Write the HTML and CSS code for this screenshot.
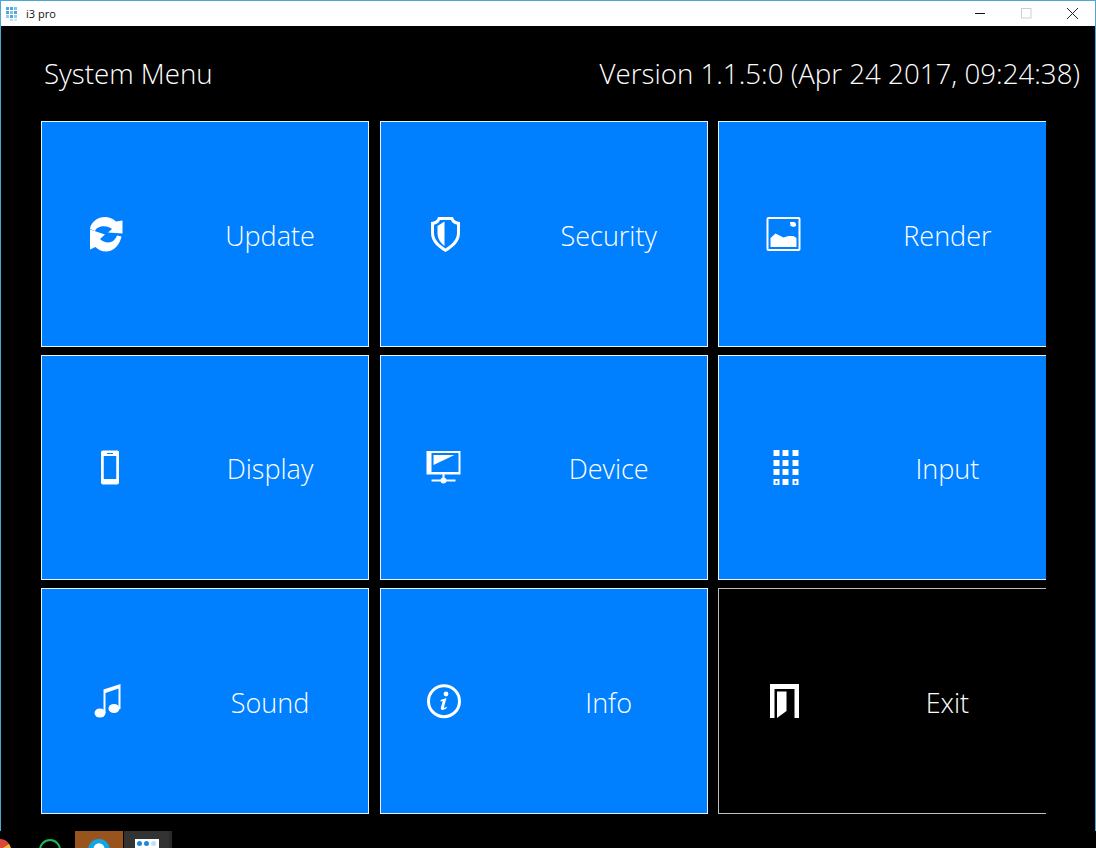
FILE: index.html
```html
<!DOCTYPE html>
<html lang="en">
<head>
<meta charset="utf-8">
<title>i3 pro</title>
<link rel="stylesheet" href="styles.css">
</head>
<body>
<div class="window">
  <div class="titlebar">
    <svg class="app-icon" width="14" height="16" viewBox="0 0 14 16">
      <g fill="#4aa8e0">
        <rect x="0" y="1" width="3" height="3"/><rect x="4" y="1" width="3" height="3"/><rect x="8" y="1" width="3" height="3" opacity=".7"/>
        <rect x="0" y="5" width="3" height="3"/><rect x="4" y="5" width="3" height="3" opacity=".7"/><rect x="8" y="5" width="3" height="3"/>
        <rect x="0" y="9" width="3" height="3" opacity=".6"/><rect x="4" y="9" width="3" height="3"/><rect x="8" y="9" width="3" height="3" opacity=".6"/>
        <rect x="4" y="13" width="3" height="2" opacity=".4"/><rect x="8" y="13" width="3" height="2" opacity=".3"/>
      </g>
    </svg>
    <span class="app-title">i3 pro</span>
    <div class="controls">
      <svg class="ctl" width="46" height="25" viewBox="0 0 46 25"><path d="M18 12.500h10" stroke="#111" fill="none"/></svg>
      <svg class="ctl" width="46" height="25" viewBox="0 0 46 25"><rect x="18.500" y="7.500" width="9.500" height="9.500" stroke="#cfcfcf" fill="none"/></svg>
      <svg class="ctl" width="46" height="25" viewBox="0 0 46 25"><path d="M18 7l11 11M29 7L18 18" stroke="#222" fill="none"/></svg>
    </div>
  </div>
  <div class="content">
    <header class="header">
      <span class="heading">System Menu</span>
      <span class="heading">Version 1.1.5:0 (Apr 24 2017, 09:24:38)</span>
    </header>
    <div class="grid-clip">
      <div class="grid">
        <div class="tile">
          <svg class="icon" viewBox="2 -1 70 70"><path d="M20 29C21 21 29 16.500 36 17C40 17.200 43.500 19 46 21.500L52.500 20.500V33.500L38 32.500L42 29C39 26.500 35 25.800 31 26.500C28 27.300 26 28.500 25 31Z"/><path d="M20 29.500L35 34.500L30 39C33 42 37 43 41 42C44 41 46 38 47 35.500L51.500 36.500C49.500 45.500 43 51.500 36 51.500C31.500 51.500 28 49.500 25.500 47L20 49.500Z"/></svg>
          <span class="label">Update</span>
        </div>
        <div class="tile">
          <svg class="icon" viewBox="0.500 -1 70 70"><path fill-rule="evenodd" d="M28.500 17H43.500L44.500 19.500C46 21 48 22 50.500 22V33C50.500 42 43 48 36 52C29 48 21.500 42 21.500 33V22C24 22 26 21 27.500 19.500ZM30.500 20L29.500 22C28 23.500 26.500 24.300 24.500 24.700V33C24.500 40 30.500 45 36 48.500C41.500 45 47.500 40 47.500 33V24.700C45.500 24.300 44 23.500 42.500 22L41.500 20Z"/><path d="M28 26L35 21.500V46C31 43 28 38.500 28 33Z"/></svg>
          <span class="label">Security</span>
        </div>
        <div class="tile">
          <svg class="icon" viewBox="-1.500 -1 70 70"><rect x="17" y="18" width="32" height="32" rx="1" fill="none" stroke="#fff" stroke-width="2"/><path d="M20 47V38L25 33.500L30 36L33 37.500L38 36L43 36L46 38V47Z"/><path d="M39.500 22H44L45.500 23.500V26L43 27L40 26Z"/></svg>
          <span class="label">Render</span>
        </div>
        <div class="tile">
          <svg class="icon" viewBox="2 -3 70 70"><path fill-rule="evenodd" d="M33 15.500H47.500Q49 15.500 49 17V47.500Q49 49.500 47 49.500H33Q31 49.500 31 47.500V17Q31 15.500 33 15.500ZM33.500 21V44H46.500V21Z"/><rect x="33" y="21" width="1" height="23" opacity=".5"/><rect x="46" y="21" width="1" height="23" opacity=".5"/><rect x="37" y="18" width="6" height="1" fill="#007fff"/></svg>
          <span class="label">Display</span>
        </div>
        <div class="tile">
          <svg class="icon" viewBox="0.500 -3 70 70"><path fill-rule="evenodd" d="M17 16H51V39.500H17ZM22 18V37H49V18Z"/><path d="M24 20H45L24 30Z"/><rect x="22" y="44.500" width="24" height="2"/><circle cx="34" cy="45.500" r="3"/><rect x="33" y="39" width="2" height="6"/></svg>
          <span class="label">Device</span>
        </div>
        <div class="tile">
          <svg class="icon" viewBox="-1.500 -3 70 70"><path fill-rule="evenodd" d="M23 15h6v6h-6zM32 15h6v6h-6zM42 15h6v6h-6zM23 25h6v6h-6zM32 25h6v6h-6zM42 25h6v6h-6zM23 34h6v6h-6zM32 34h6v6h-6zM42 34h6v6h-6zM23 44h6v6h-6zM25 46v2.500h2V46zM32 44h6v6h-6zM42 44h6v6h-6zM44 46v2.500h2V46z"/></svg>
          <span class="label">Input</span>
        </div>
        <div class="tile">
          <svg class="icon" viewBox="2 -2 70 70"><ellipse cx="30" cy="45" rx="5.500" ry="4.500"/><ellipse cx="44" cy="40.500" rx="5.500" ry="4.500"/><path d="M33.500 45V21.500L50.500 16V41H48.500V20.500L35.500 25V45Z"/></svg>
          <span class="label">Sound</span>
        </div>
        <div class="tile">
          <svg class="icon" viewBox="0 -2.500 70 70"><circle cx="34" cy="32.700" r="15.500" fill="none" stroke="#fff" stroke-width="3"/><circle cx="36" cy="25.500" r="2.400"/><path d="M30.500 31.500L36.500 29.500L34 38.500C33.800 39.500 34.500 39.800 36.500 38.300L37 39.300C34 41.800 30.500 42.500 30.800 39.300L32.800 32.500L30.800 33Z"/></svg>
          <span class="label">Info</span>
        </div>
        <div class="tile tile-exit">
          <svg class="icon" viewBox="-1.500 -2 70 70"><path d="M19.500 16H48.500V50H44V21H24V50H19.500Z"/><path d="M26.500 23.500H36V43L26.500 50Z"/></svg>
          <span class="label">Exit</span>
        </div>
      </div>
    </div>
  </div>
</div>
<div class="dock">
  <svg class="dock-chrome" width="12" height="10" viewBox="0 0 12 10"><circle cx="0" cy="11" r="11" fill="#d9483b"/><path d="M0 11H11A11 11 0 0 0 9 5Z" fill="#e7b93c"/></svg>
  <svg class="dock-green" width="24" height="9" viewBox="0 0 24 9"><circle cx="11" cy="11" r="10" fill="none" stroke="#1fb85a" stroke-width="2"/></svg>
  <div class="dock-skype"><span class="skype-mark"></span></div>
  <div class="dock-dark"><div class="dots"><i></i><i></i><i class="hollow"></i></div></div>
</div>
</body>
</html>
```
FILE: styles.css
```css
* { box-sizing: border-box; }
html, body { margin: 0; padding: 0; background: #000; }
body { width: 1096px; height: 848px; overflow: hidden; display: flex; flex-direction: column; }

.window {
  height: 831px;
  flex: none;
  display: flex;
  flex-direction: column;
  border: 1px solid #4aa8d8;
  border-bottom: 0;
}
.titlebar {
  height: 25px;
  flex: none;
  background: #fff;
  display: flex;
  align-items: center;
  padding-left: 5px;
}
.app-icon { flex: none; }
.app-title {
  margin-left: 6px;
  font: 11px "Open Sans", "Liberation Sans", sans-serif;
  color: #111;
}
.controls { margin-left: auto; display: flex; }
.ctl { display: block; }

.content { flex: 1; background: #000; color: #fff; min-height: 0; }
.header {
  height: 95px;
  display: flex;
  justify-content: space-between;
  align-items: center;
  padding: 0 15px 2px 43px;
}
.heading {
  font: 300 27.7px "Open Sans", "Liberation Sans", sans-serif;
  color: #fff;
  white-space: nowrap;
}
.grid-clip { width: 1045px; padding-left: 40px; overflow: hidden; }
.grid {
  width: 1040px;
  display: grid;
  grid-template-columns: 328.4px 328.4px 340px;
  grid-auto-rows: 225.5px;
  gap: 8px 10.3px;
}
.tile {
  background: #007fff;
  border: 1px solid #e8f3ff;
  display: grid;
  grid-template-columns: 129px 198px;
  align-items: center;
}
.tile-exit { background: #000; border-color: #bdbdbd; }
.icon {
  width: 70px;
  height: 70px;
  justify-self: center;
  fill: #fff;
}
.label {
  font: 300 27px "Open Sans", "Liberation Sans", sans-serif;
  text-align: center;
  color: #fff;
  padding-top: 3px;
}

.dock { height: 17px; flex: none; position: relative; background: #000; display: flex; }
.dock-chrome { margin-top: 8px; flex: none; }
.dock-green { margin: 8px 0 0 27px; flex: none; }
.dock-skype {
  width: 48px;
  margin-left: 12px;
  background: #98541c;
  flex: none;
  display: flex;
  justify-content: center;
  overflow: hidden;
}
.skype-mark {
  width: 22px;
  height: 22px;
  margin-top: 8px;
  border-radius: 50%;
  background: radial-gradient(circle at 50% 45%, #fff 0 5px, #12a5e4 6px);
}
.dock-dark {
  width: 48px;
  margin-left: 1px;
  background: #333;
  border-right: 3px solid #2a2a2a;
  display: flex;
  justify-content: center;
  flex: none;
}
.dots {
  width: 24px;
  height: 9px;
  margin-top: 8px;
  background: #fff;
  display: flex;
  gap: 2px;
  justify-content: center;
  padding-top: 2px;
}
.dots i { width: 5px; height: 5px; border-radius: 50%; background: #1e88d8; display: block; }
.dots .hollow { background: #bfe0f7; }
```
